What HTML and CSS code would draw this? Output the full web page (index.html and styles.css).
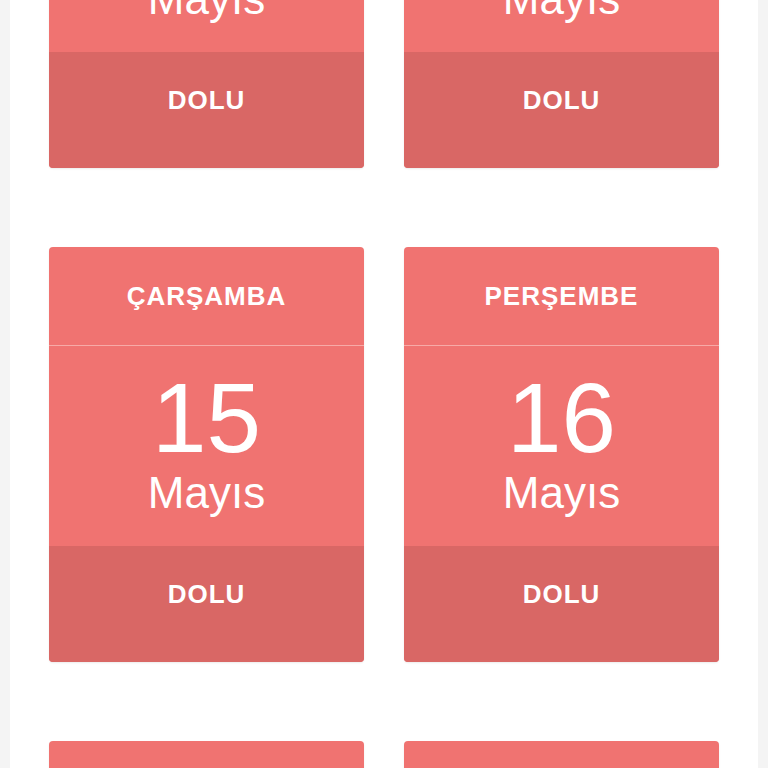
FILE: index.html
```html
<!DOCTYPE html>
<html>
<head>
    <title>Randevu Takvimi</title>
    <link rel="stylesheet" href="styles.css">
</head>
<body>
    <div class="page">
        <div class="days">
            <div class="day">
                <div class="day-name">PAZARTESİ</div>
                <div class="day-date">
                    <div class="day-num">13</div>
                    <div class="day-month">Mayıs</div>
                </div>
                <div class="day-status">DOLU</div>
            </div>
            <div class="day">
                <div class="day-name">SALI</div>
                <div class="day-date">
                    <div class="day-num">14</div>
                    <div class="day-month">Mayıs</div>
                </div>
                <div class="day-status">DOLU</div>
            </div>
            <div class="day">
                <div class="day-name">ÇARŞAMBA</div>
                <div class="day-date">
                    <div class="day-num">15</div>
                    <div class="day-month">Mayıs</div>
                </div>
                <div class="day-status">DOLU</div>
            </div>
            <div class="day">
                <div class="day-name">PERŞEMBE</div>
                <div class="day-date">
                    <div class="day-num">16</div>
                    <div class="day-month">Mayıs</div>
                </div>
                <div class="day-status">DOLU</div>
            </div>
            <div class="day">
                <div class="day-name">CUMA</div>
                <div class="day-date">
                    <div class="day-num">17</div>
                    <div class="day-month">Mayıs</div>
                </div>
                <div class="day-status">DOLU</div>
            </div>
            <div class="day">
                <div class="day-name">CUMARTESİ</div>
                <div class="day-date">
                    <div class="day-num">18</div>
                    <div class="day-month">Mayıs</div>
                </div>
                <div class="day-status">DOLU</div>
            </div>
        </div>
    </div>
</body>
</html>
```

FILE: styles.css
```css
* {
    box-sizing: border-box;
}

html, body {
    height: 100%;
}

body {
    margin: 0;
    background: #f4f4f4;
    font-family: "Liberation Sans", Arial, sans-serif;
    color: #fff;
    overflow: hidden;
}

.page {
    margin: 0 10px;
    min-height: 100%;
    background: #fff;
    padding: 0 39px;
}

.days {
    display: grid;
    grid-template-columns: 315px 315px;
    column-gap: 40px;
    row-gap: 79px;
    margin-top: -247px;
}

.day {
    border-radius: 4px;
    overflow: hidden;
    background: #f07371;
    box-shadow: 0 1px 2px rgba(0, 0, 0, .08);
}

.day-name {
    height: 99px;
    border-bottom: 1px solid #f7aaa7;
    display: flex;
    align-items: center;
    justify-content: center;
    font-size: 26px;
    font-weight: bold;
    letter-spacing: 1px;
}

.day-date {
    height: 200px;
    padding-top: 23px;
    text-align: center;
}

.day-num {
    font-size: 98px;
    line-height: 1;
}

.day-month {
    margin-top: 4px;
    font-size: 44px;
    line-height: 1;
}

.day-status {
    height: 116px;
    padding-bottom: 20px;
    background: #d96765;
    display: flex;
    align-items: center;
    justify-content: center;
    font-size: 26px;
    font-weight: bold;
    letter-spacing: 1px;
}
```
